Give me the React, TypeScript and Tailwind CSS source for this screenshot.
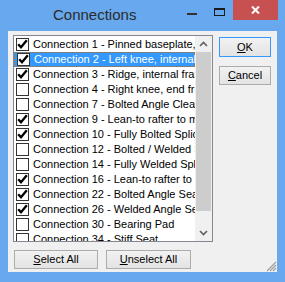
import React from 'react';

const items: [string, boolean][] = [
  ['Connection 1 - Pinned baseplate, column base', true],
  ['Connection 2 - Left knee, internal frame', true],
  ['Connection 3 - Ridge, internal frame', true],
  ['Connection 4 - Right knee, end frame', false],
  ['Connection 7 - Bolted Angle Cleat', false],
  ['Connection 9 - Lean-to rafter to main', true],
  ['Connection 10 - Fully Bolted Splice', true],
  ['Connection 12 - Bolted / Welded Splice', false],
  ['Connection 14 - Fully Welded Splice', false],
  ['Connection 16 - Lean-to rafter to main', true],
  ['Connection 22 - Bolted Angle Seat', true],
  ['Connection 26 - Welded Angle Seat', true],
  ['Connection 30 - Bearing Pad', false],
  ['Connection 34 - Stiff Seat', false],
];

const CheckBox = ({ checked }: { checked: boolean }) => (
  <div className="w-[13px] h-[13px] shrink-0 border border-[#333333] bg-white flex items-center justify-center">
    {checked && (
      <svg width="11" height="11" viewBox="0 0 11 11">
        <path d="M1.2 5.2 L4 8.3 L9.8 1.2" fill="none" stroke="#000" strokeWidth="2.3" />
      </svg>
    )}
  </div>
);

const Btn = ({ children, w, primary }: { children: React.ReactNode; w: string; primary?: boolean }) => (
  <div
    className={`${w} flex items-center justify-center border bg-gradient-to-b from-[#f2f2f2] to-[#e3e3e3] text-[11px] text-black ${
      primary ? 'border-[#3399ff]' : 'border-[#acacac]'
    }`}
  >
    {children}
  </div>
);

export default function App() {
  return (
    <div
      className="w-[285px] h-[282px] bg-[#67a8ee] flex flex-col overflow-hidden"
      style={{ fontFamily: '"Liberation Sans", Arial, sans-serif' }}
    >
      {/* title bar */}
      <div className="h-[31px] flex items-start shrink-0">
        <div className="pl-[53px] pt-[6px] text-[15px] text-[#2b2b2b] leading-[18px]">Connections</div>
        <div className="flex-1" />
        <div className="w-[10px] h-[2px] bg-[#333333] mt-[13px] mr-[17px]" />
        <div className="w-[11px] h-[8px] border border-t-2 border-[#1a1a1a] mt-[8px] mr-[8px]" />
        <div className="w-[45px] h-[20px] bg-[#c75050] flex items-center justify-center mr-[7px]">
          <svg width="9" height="8" viewBox="0 0 9 8">
            <path d="M1 0.5 L8 7.5 M8 0.5 L1 7.5" stroke="#fff" strokeWidth="2" />
          </svg>
        </div>
      </div>

      {/* client area */}
      <div className="mx-[8px] h-[241px] bg-[#f0f0f0] flex flex-col relative">
        <div className="flex pl-[5px] pt-[4px]">
          <div className="w-[200px] h-[207px] border border-[#828790] bg-white flex overflow-hidden">
            <div className="w-[181px] pt-[1px] overflow-hidden">
              {items.map(([label, checked], i) => {
                const sel = i === 1;
                return (
                  <div
                    key={i}
                    className={`h-[15px] flex items-center pl-[2px] whitespace-nowrap text-[11px] leading-[13px] ${
                      sel ? 'bg-[#3399ff] text-white border border-dotted border-[#cc6600] pl-[1px]' : 'text-black'
                    }`}
                  >
                    <CheckBox checked={checked} />
                    <span className="ml-[4px]">{label}</span>
                  </div>
                );
              })}
            </div>
            <div className="w-[17px] bg-[#f0f0f0] flex flex-col items-center">
              <div className="h-[16px] flex items-center justify-center">
                <svg width="9" height="6" viewBox="0 0 9 6">
                  <path d="M1 5 L4.5 1.5 L8 5" fill="none" stroke="#606060" strokeWidth="1.6" />
                </svg>
              </div>
              <div className="w-[15px] h-[159px] bg-[#cdcdcd]" />
              <div className="flex-1" />
              <div className="h-[16px] flex items-center justify-center">
                <svg width="9" height="6" viewBox="0 0 9 6">
                  <path d="M1 1 L4.5 4.5 L8 1" fill="none" stroke="#606060" strokeWidth="1.6" />
                </svg>
              </div>
            </div>
          </div>
          <div className="ml-[6px] pt-[2px] flex flex-col gap-[9px]">
            <div className="h-[20px] flex">
              <Btn w="w-[52px]" primary>
                <span><u>O</u>K</span>
              </Btn>
            </div>
            <div className="h-[19px] flex">
              <Btn w="w-[52px]">
                <span><u>C</u>ancel</span>
              </Btn>
            </div>
          </div>
        </div>
        <div className="flex pl-[6px] pt-[8px] gap-[8px] h-[27px]">
          <Btn w="w-[84px]">
            <span><u>S</u>elect All</span>
          </Btn>
          <Btn w="w-[85px]">
            <span><u>U</u>nselect All</span>
          </Btn>
        </div>
        <svg className="absolute right-0 bottom-0" width="12" height="12" viewBox="0 0 12 12">
          <path d="M11 2 L2 11 M11 5 L5 11 M11 8 L8 11" stroke="#a0a0a0" strokeWidth="1.2" />
        </svg>
      </div>
    </div>
  );
}
